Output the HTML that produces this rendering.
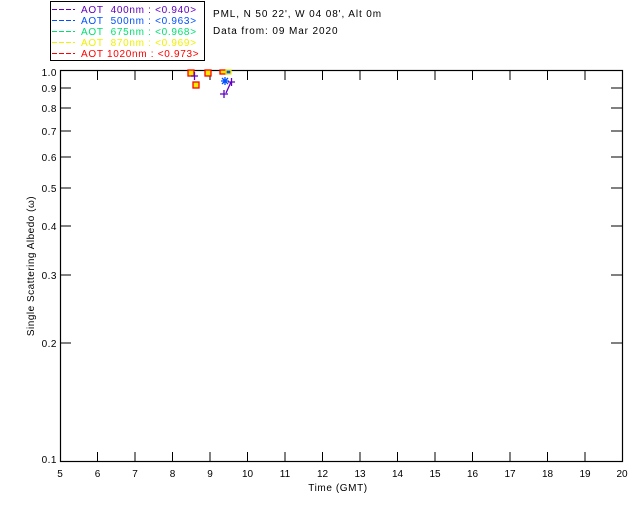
<!DOCTYPE html>
<html><head><style>body{margin:0;background:#fff}svg{display:block}text{font-family:"Liberation Sans",sans-serif;font-size:10px}</style></head>
<body>
<svg width="640" height="512" xmlns="http://www.w3.org/2000/svg">
<rect x="50.5" y="1.5" width="154" height="59" fill="none" stroke="#000"/>
<g stroke-dasharray="5 2" stroke-width="1">
<path d="M52 9.5h23" stroke="#6000c0"/><path d="M52 20.5h23" stroke="#0050ff"/><path d="M52 31.5h23" stroke="#00e070"/><path d="M52 42.5h23" stroke="#f0f000"/><path d="M52 53.5h23" stroke="#ff0000"/>
</g>
<g font-size="10" letter-spacing="0.7">
<text x="81" y="13" fill="#6000c0">AOT&#160;&#160;400nm : &lt;0.940&gt;</text>
<text x="81" y="24" fill="#0050ff">AOT&#160;&#160;500nm : &lt;0.963&gt;</text>
<text x="81" y="35" fill="#00e070">AOT&#160;&#160;675nm : &lt;0.968&gt;</text>
<text x="81" y="46" fill="#f0f000">AOT&#160;&#160;870nm : &lt;0.969&gt;</text>
<text x="81" y="57" fill="#ff0000">AOT 1020nm : &lt;0.973&gt;</text>
</g>
<g letter-spacing="0.9">
<text x="213" y="17">PML, N 50 22', W 04 08', Alt 0m</text>
<text x="213" y="34">Data from: 09 Mar 2020</text>
</g>
<rect x="60.5" y="70.5" width="562" height="391" fill="none" stroke="#000" stroke-width="1.2"/>
<g stroke="#000">
<path d="M97.5 71v9M135 71v9M172.5 71v9M210 71v9M247.5 71v9M285 71v9M322.5 71v9M360 71v9M397.5 71v9M435 71v9M472.5 71v9M510 71v9M547.5 71v9M585 71v9"/>
<path d="M97.5 461v-9M135 461v-9M172.5 461v-9M210 461v-9M247.5 461v-9M285 461v-9M322.5 461v-9M360 461v-9M397.5 461v-9M435 461v-9M472.5 461v-9M510 461v-9M547.5 461v-9M585 461v-9"/>
<path d="M60 88h11M60 108h11M60 131h11M60 157h11M60 188h11M60 226h11M60 275h11M60 343h11"/>
<path d="M622 88h-11M622 108h-11M622 131h-11M622 157h-11M622 188h-11M622 226h-11M622 275h-11M622 343h-11"/>
</g>
<g text-anchor="end" letter-spacing="0.5">
<text x="57" y="76">1.0</text><text x="57" y="92">0.9</text><text x="57" y="112">0.8</text><text x="57" y="135">0.7</text><text x="57" y="161">0.6</text><text x="57" y="192">0.5</text><text x="57" y="230">0.4</text><text x="57" y="279">0.3</text><text x="57" y="347">0.2</text><text x="57" y="463">0.1</text>
</g>
<g text-anchor="middle">
<text x="60" y="477">5</text><text x="97.5" y="477">6</text><text x="135" y="477">7</text><text x="172.5" y="477">8</text><text x="210" y="477">9</text><text x="247.5" y="477">10</text><text x="285" y="477">11</text><text x="322.5" y="477">12</text><text x="360" y="477">13</text><text x="397.5" y="477">14</text><text x="435" y="477">15</text><text x="472.5" y="477">16</text><text x="510" y="477">17</text><text x="547.5" y="477">18</text><text x="585" y="477">19</text><text x="622" y="477">20</text>
<text x="338" y="491" letter-spacing="0.6">Time (GMT)</text>
</g>
<text transform="translate(34 266) rotate(-90)" text-anchor="middle" letter-spacing="0.5">Single Scattering Albedo (ω)</text>
<g stroke-width="1.3">
<rect x="188" y="70" width="6" height="6" fill="#f0f000" stroke="#f00"/>
<rect x="193" y="82" width="6" height="6" fill="#f0f000" stroke="#f00"/>
<rect x="205" y="70" width="6" height="6" fill="#f0f000" stroke="#f00"/>
<rect x="220" y="70" width="6" height="4" fill="#f0f000" stroke="#f00"/>
<rect x="226" y="70" width="5" height="4" fill="#0050ff" stroke="#f0f000"/>
<path d="M222 78l6 6M228 78l-6 6M221 81h8M225 77v8" stroke="#0050ff"/>
<path d="M228 82h7M231.5 78v8M231 82l-5 11M220 94h8M224 90v8M191 76h7M194.5 72v8" stroke="#6000c0" fill="none"/>
</g>
</svg>
</body></html>
